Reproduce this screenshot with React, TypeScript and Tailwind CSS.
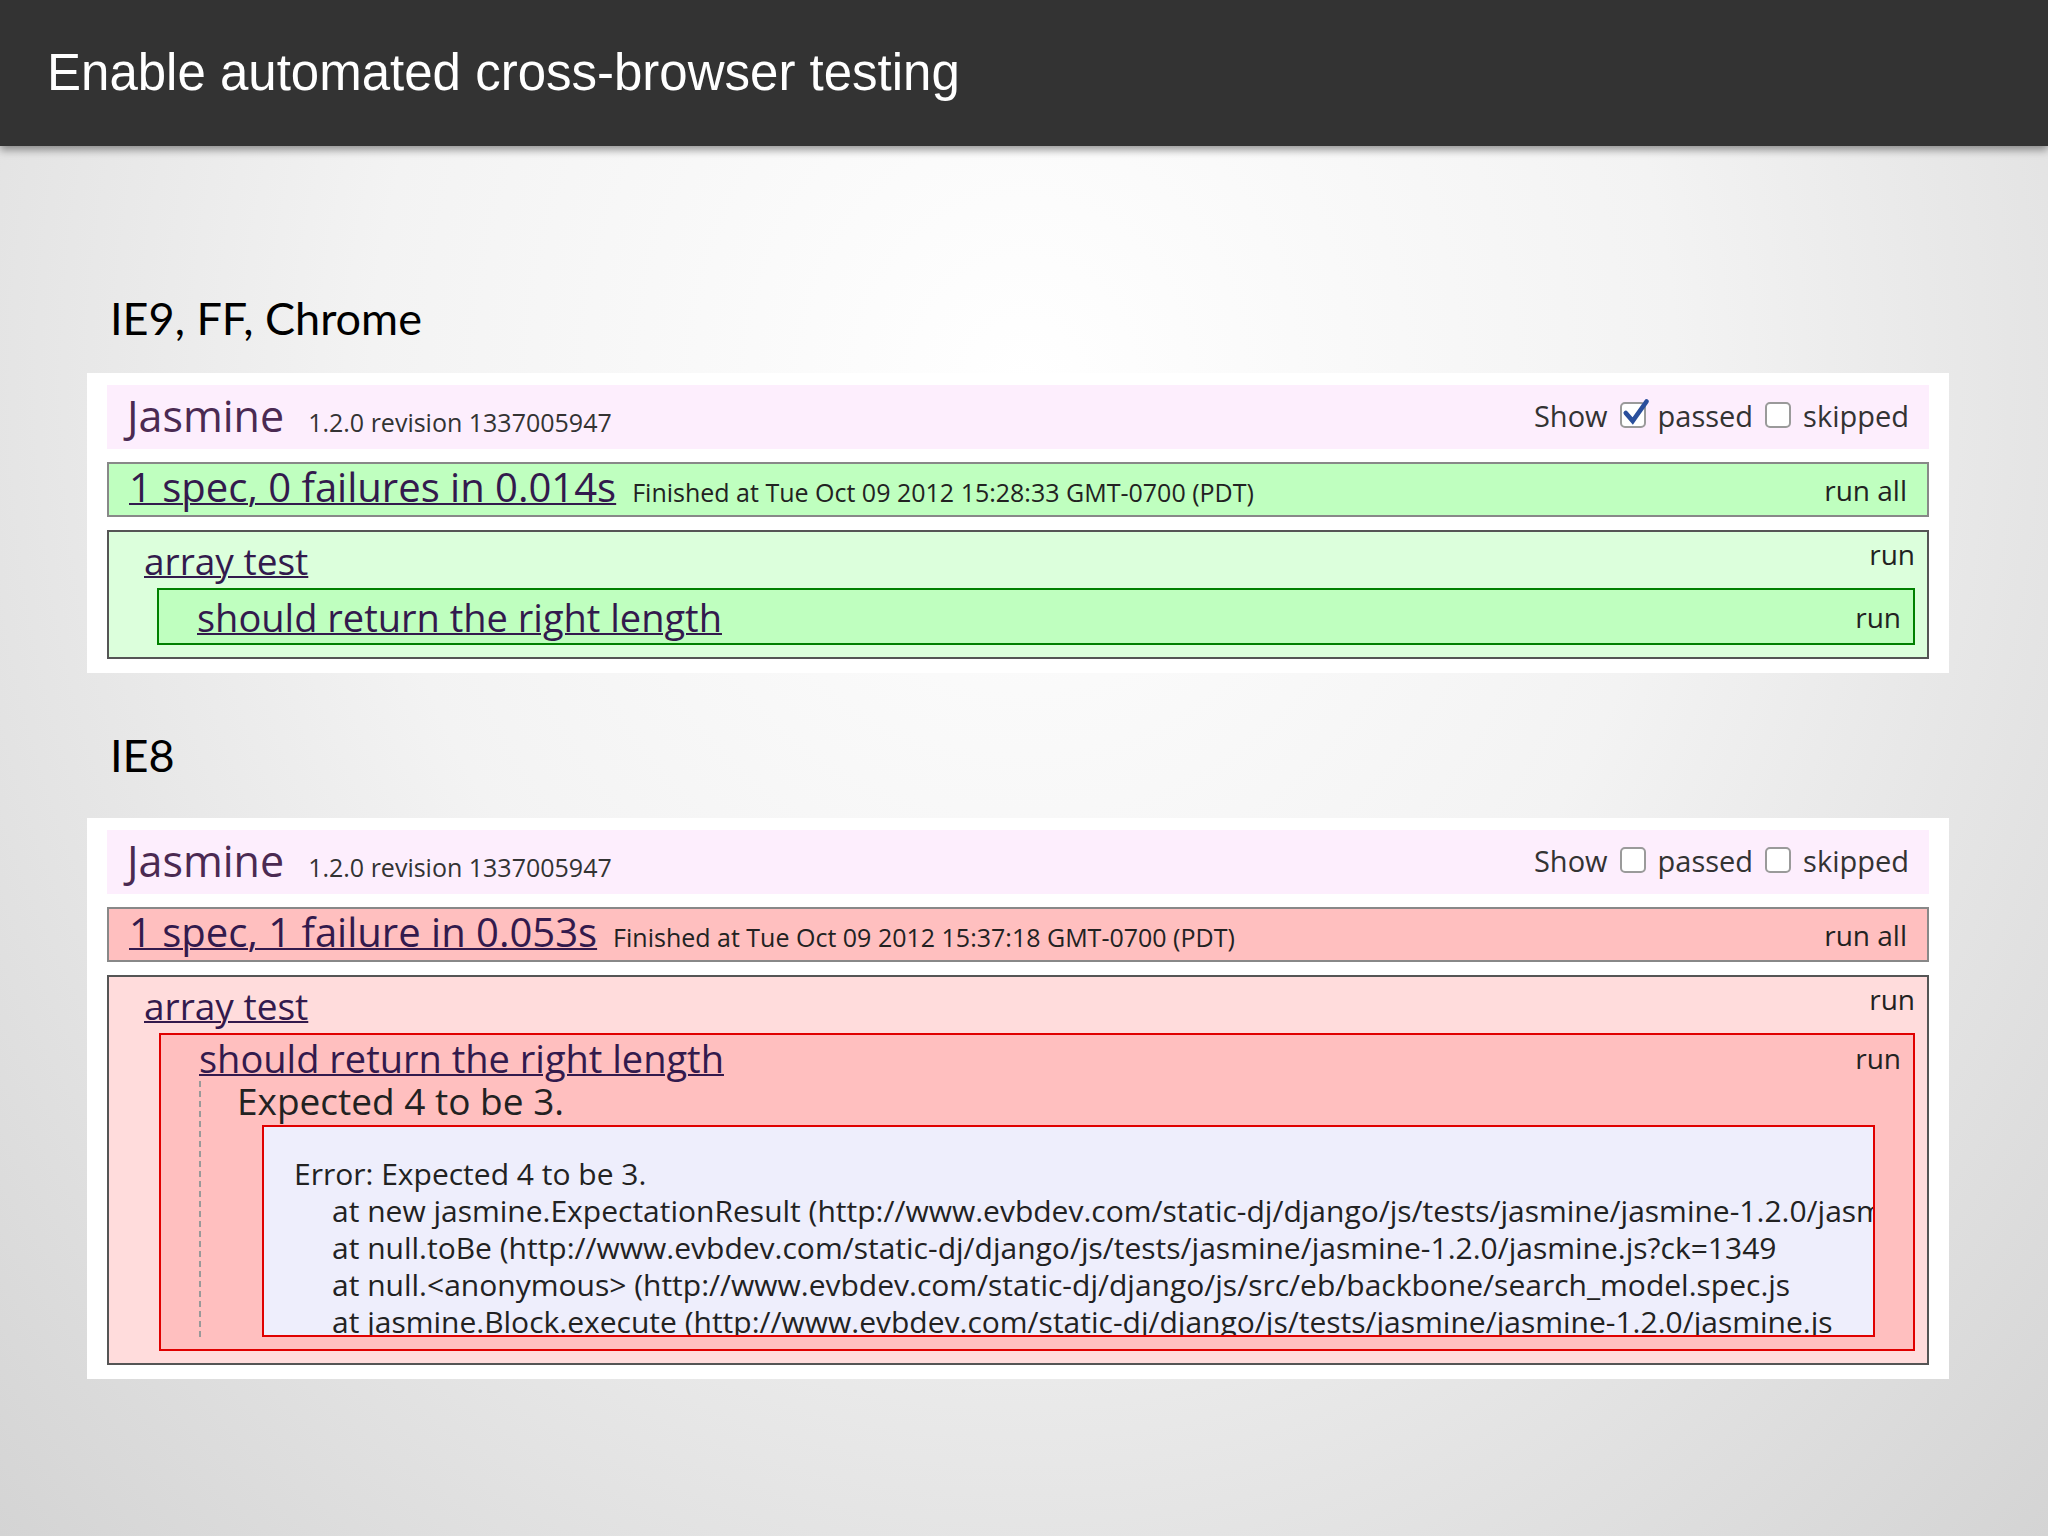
const F = { fontFamily: '"Open Sans", "DejaVu Sans", sans-serif' }

function Box({ checked }: { checked: boolean }) {
  return (
    <span className="relative inline-block w-[26px] h-[26px] rounded-[5px] border-2 border-[#9a9a9a] bg-white mx-3 align-middle">
      {checked && (
        <svg viewBox="0 0 26 26" className="absolute -top-[6px] -left-[2px] w-[30px] h-[30px]">
          <path d="M5 13 L11 20 L23 3" fill="none" stroke="#2a4f9c" strokeWidth="4" strokeLinecap="round" />
        </svg>
      )}
    </span>
  )
}

function Header({ checked }: { checked: boolean }) {
  return (
    <div className="flex items-end justify-between bg-[#fdeefd] h-[64px] px-5 pb-2 text-[#333]">
      <div className="flex items-baseline gap-6">
        <span className="text-[43px] leading-none text-[#4b2a52]">Jasmine</span>
        <span className="text-[25px]">1.2.0 revision 1337005947</span>
      </div>
      <div className="flex items-center text-[29px] mb-1">
        Show<Box checked={checked} />passed<Box checked={false} />skipped
      </div>
    </div>
  )
}

function Panel({ fail }: { fail: boolean }) {
  const sumBg = fail ? "bg-[#ffbfbf]" : "bg-[#bfffbf]"
  const suiteBg = fail ? "bg-[#ffdcdc]" : "bg-[#dcffdc]"
  const link = "underline text-[#331a4d] decoration-2"
  return (
    <div className="bg-white ml-[87px] mr-[99px] px-[20px] pt-[12px] pb-[14px] flex flex-col gap-[13px]" style={F}>
      <Header checked={!fail} />
      <div className={`flex items-center justify-between h-[55px] ${sumBg} border-2 border-[#888] px-5 text-[#222]`}>
        <div className="flex items-baseline gap-4">
          <span className={`text-[40px] leading-none ${link}`}>{fail ? "1 spec, 1 failure in 0.053s" : "1 spec, 0 failures in 0.014s"}</span>
          <span className="text-[25px]">Finished at Tue Oct 09 2012 {fail ? "15:37:18" : "15:28:33"} GMT-0700 (PDT)</span>
        </div>
        <span className="text-[28px]">run all</span>
      </div>
      <div className={`${suiteBg} border-2 border-[#555] pl-[35px] pr-3 pb-[12px]`}>
        <div className="flex justify-between h-[56px] items-center text-[#222]">
          <span className={`text-[37px] leading-none ${link}`}>array test</span>
          <span className="text-[28px] -mt-3">run</span>
        </div>
        {fail ? (
          <div className="bg-[#ffbfbf] border-2 border-[#e00000] ml-[15px] pl-[38px] pr-[38px] pb-[12px]">
            <div className="flex justify-between items-center h-[46px] -mr-[26px]">
              <span className={`text-[38px] leading-none ${link}`}>should return the right length</span>
              <span className="text-[28px] text-[#222]">run</span>
            </div>
            <div className="border-l-2 border-dashed border-[#999] pl-[36px]">
              <div className="text-[37px] leading-[40px] mb-[4px] text-[#222]">Expected 4 to be 3.</div>
              <div className="ml-[25px] h-[212px] overflow-hidden bg-[#eeeefc] border-2 border-[#e00000] pt-[28px] pl-[30px] text-[30px] leading-[37px] text-[#222] whitespace-nowrap">
                <div>Error: Expected 4 to be 3.</div>
                <div className="pl-[38px]">
                  <div>at new jasmine.ExpectationResult (http://www.evbdev.com/static-dj/django/js/tests/jasmine/jasmine-1.2.0/jasmine.js</div>
                  <div>at null.toBe (http://www.evbdev.com/static-dj/django/js/tests/jasmine/jasmine-1.2.0/jasmine.js?ck=1349</div>
                  <div>at null.&lt;anonymous&gt; (http://www.evbdev.com/static-dj/django/js/src/eb/backbone/search_model.spec.js</div>
                  <div>at jasmine.Block.execute (http://www.evbdev.com/static-dj/django/js/tests/jasmine/jasmine-1.2.0/jasmine.js</div>
                </div>
              </div>
            </div>
          </div>
        ) : (
          <div className="flex justify-between items-center h-[57px] bg-[#bfffbf] border-2 border-[#008000] ml-[13px] pl-[38px] pr-3">
            <span className={`text-[38px] leading-none ${link}`}>should return the right length</span>
            <span className="text-[28px] text-[#222]">run</span>
          </div>
        )}
      </div>
    </div>
  )
}

export default function App() {
  return (
    <div className="w-[2048px] h-[1536px] overflow-hidden bg-[radial-gradient(ellipse_at_50%_25%,#ffffff_0%,#f3f3f3_45%,#d4d4d4_100%)]">
      <div className="h-[146px] bg-[#333333] flex items-center pl-[47px] shadow-[0_4px_8px_rgba(0,0,0,0.4)]">
        <h1 className="text-white text-[51px]" style={{ fontFamily: '"Liberation Sans", Arial, sans-serif' }}>Enable automated cross-browser testing</h1>
      </div>
      <div className="pl-[110px] pt-[150px] pb-[32px] text-[45px] leading-none text-black" style={{ fontFamily: 'Lato, "Open Sans", sans-serif' }}>IE9, FF, Chrome</div>
      <Panel fail={false} />
      <div className="pl-[110px] pt-[60px] pb-[40px] text-[45px] leading-none text-black" style={{ fontFamily: 'Lato, "Open Sans", sans-serif' }}>IE8</div>
      <Panel fail={true} />
    </div>
  )
}
